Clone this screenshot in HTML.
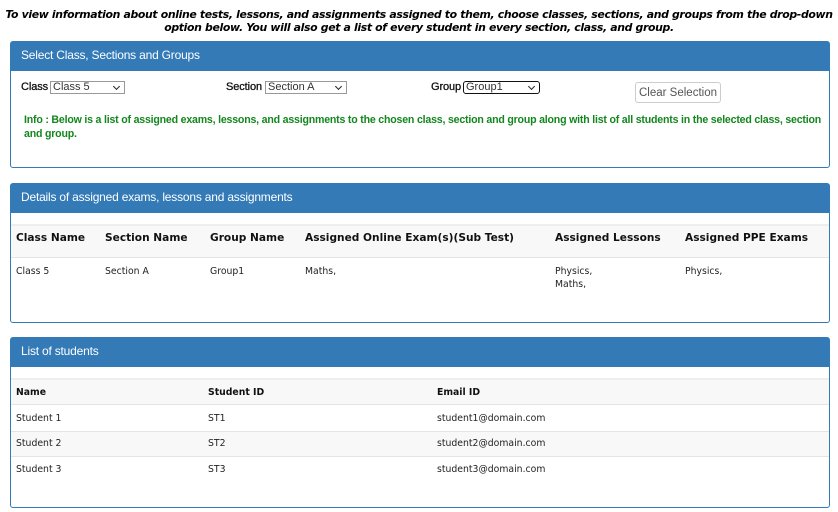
<!DOCTYPE html>
<html><head><style>
*{margin:0;padding:0;box-sizing:border-box}
body{width:838px;height:512px;background:#fff;position:relative;overflow:hidden;font-family:"Liberation Sans",Arial,sans-serif;color:#000}
.a{position:absolute;white-space:nowrap}
.top{left:0;width:838px;text-align:center;font-family:"DejaVu Sans",Verdana,sans-serif;font-weight:bold;font-style:italic;font-size:10.9px;line-height:13px;letter-spacing:-0.35px}
.panel{position:absolute;left:10px;width:820px;border:1px solid #337ab7;border-radius:3px;background:#fff}
.ph{height:29px;background:#337ab7;color:#fff;font-size:12px;line-height:27px;padding-left:10px;letter-spacing:-0.2px}
.v{font-family:"DejaVu Sans",Verdana,sans-serif;font-size:9.3px;color:#222}
.vb{font-family:"DejaVu Sans",Verdana,sans-serif;font-size:10.6px;font-weight:bold;color:#111}
.vb2{font-family:"DejaVu Sans",Verdana,sans-serif;font-size:9.3px;font-weight:bold;color:#111}
.sel{position:absolute;height:13px;border:1px solid #999;font-size:11px;line-height:11px;padding-left:2px;color:#333;background:#fff}
.sel:after{content:"";position:absolute;right:5px;top:2px;width:4px;height:4px;border-right:1.5px solid #222;border-bottom:1.5px solid #222;transform:rotate(45deg)}
.lbl{font-size:11px;color:#111;letter-spacing:-0.1px;-webkit-text-stroke:0.3px #111}
.g{color:#13871e;font-weight:bold;font-size:10.6px;letter-spacing:-0.2px}
</style></head><body>
<div class="a top" style="top:8px">To view information about online tests, lessons, and assignments assigned to them, choose classes, sections, and groups from the drop-down</div>
<div class="a top" style="top:21px">option below. You will also get a list of every student in every section, class, and group.</div>

<div class="panel" style="top:41px;height:127px"><div class="ph">Select Class, Sections and Groups</div></div>
<div class="a lbl" style="left:21px;top:81px">Class</div>
<div class="sel" style="left:50px;top:81px;width:75px">Class 5</div>
<div class="a lbl" style="left:226px;top:81px">Section</div>
<div class="sel" style="left:265px;top:81px;width:82px">Section A</div>
<div class="a lbl" style="left:431px;top:81px">Group</div>
<div class="sel" style="left:463px;top:81px;width:77px;border:1.5px solid #111;border-radius:3px">Group1</div>
<div class="a" style="left:635px;top:82px;width:86px;height:21px;border:1px solid #ccc;border-radius:3px;font-size:11.5px;color:#555;text-align:center;line-height:21px">Clear Selection</div>
<div class="a g" style="left:24px;top:114px">Info : Below is a list of assigned exams, lessons, and assignments to the chosen class, section and group along with list of all students in the selected class, section</div>
<div class="a g" style="left:24px;top:128px">and group.</div>

<div class="panel" style="top:183px;height:140px"><div class="ph">Details of assigned exams, lessons and assignments</div></div>
<div class="a" style="left:11px;top:224px;width:818px;height:34px;background:#f8f8f8;border-top:2px solid #eee;border-bottom:1px solid #e4e4e4"></div>
<div class="a vb" style="left:16px;top:232px">Class Name</div>
<div class="a vb" style="left:105px;top:232px">Section Name</div>
<div class="a vb" style="left:210px;top:232px">Group Name</div>
<div class="a vb" style="left:305px;top:232px">Assigned Online Exam(s)(Sub Test)</div>
<div class="a vb" style="left:555px;top:232px">Assigned Lessons</div>
<div class="a vb" style="left:685px;top:232px">Assigned PPE Exams</div>
<div class="a v" style="left:16px;top:266px">Class 5</div>
<div class="a v" style="left:105px;top:266px">Section A</div>
<div class="a v" style="left:210px;top:266px">Group1</div>
<div class="a v" style="left:305px;top:266px">Maths,</div>
<div class="a v" style="left:555px;top:266px">Physics,</div>
<div class="a v" style="left:555px;top:279px">Maths,</div>
<div class="a v" style="left:685px;top:266px">Physics,</div>

<div class="panel" style="top:337px;height:171px"><div class="ph">List of students</div></div>
<div class="a" style="left:11px;top:378px;width:818px;height:27px;background:#f8f8f8;border-top:2px solid #eee;border-bottom:1px solid #e4e4e4"></div>
<div class="a" style="left:11px;top:431px;width:818px;height:26px;background:#f8f8f8;border-top:1px solid #e4e4e4;border-bottom:1px solid #e4e4e4"></div>
<div class="a vb2" style="left:16px;top:387px">Name</div>
<div class="a vb2" style="left:208px;top:387px">Student ID</div>
<div class="a vb2" style="left:437px;top:387px">Email ID</div>
<div class="a v" style="left:16px;top:413px">Student 1</div><div class="a v" style="left:208px;top:413px">ST1</div><div class="a v" style="left:437px;top:413px">student1@domain.com</div>
<div class="a v" style="left:16px;top:438px">Student 2</div><div class="a v" style="left:208px;top:438px">ST2</div><div class="a v" style="left:437px;top:438px">student2@domain.com</div>
<div class="a v" style="left:16px;top:464px">Student 3</div><div class="a v" style="left:208px;top:464px">ST3</div><div class="a v" style="left:437px;top:464px">student3@domain.com</div>
</body></html>
